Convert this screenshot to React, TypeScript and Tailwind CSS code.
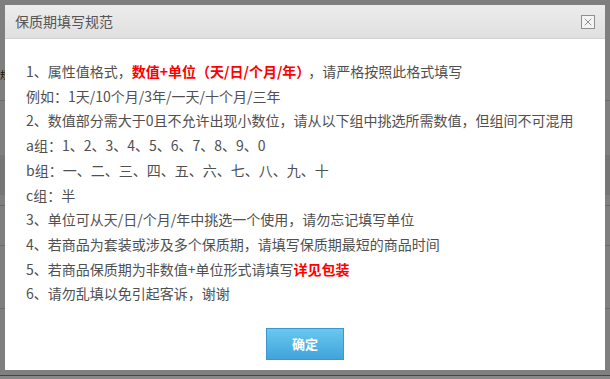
import { X } from 'lucide-react';

const lines: { text: string; red?: string; after?: string }[] = [
    { text: '1、属性值格式，', red: '数值+单位（天/日/个月/年）', after: '，请严格按照此格式填写' },
    { text: '例如：1天/10个月/3年/一天/十个月/三年' },
    { text: '2、数值部分需大于0且不允许出现小数位，请从以下组中挑选所需数值，但组间不可混用' },
    { text: 'a组：1、2、3、4、5、6、7、8、9、0' },
    { text: 'b组：一、二、三、四、五、六、七、八、九、十' },
    { text: 'c组：半' },
    { text: '3、单位可从天/日/个月/年中挑选一个使用，请勿忘记填写单位' },
    { text: '4、若商品为套装或涉及多个保质期，请填写保质期最短的商品时间' },
    { text: '5、若商品保质期为非数值+单位形式请填写', red: '详见包装' },
    { text: '6、请勿乱填以免引起客诉，谢谢' },
];

function BackgroundPage() {
    // faint page behind the mask, only its edges show
    return (
        <div className="w-[610px] h-[379px] bg-white flex flex-col text-[13px] text-[#333]">
            <div className="h-[70px]" />
            <div className="h-[10px] text-[10px] leading-[10px] text-[#222]">规</div>
            <div className="h-[20px]" />
            <div className="h-px bg-[#d8d8d8]" />
            <div className="h-[54px]" />
            <div className="h-[40px] bg-[#ececec]" />
            <div className="h-[10px]" />
            <div className="h-px bg-[#d0d0d0]" />
            <div className="h-[39px]" />
            <div className="h-px bg-[#d8d8d8]" />
            <div className="h-[62px]" />
            <div className="h-px bg-[#d8d8d8]" />
            <div className="flex-1" />
            <div className="h-[4px] bg-[#888]" />
        </div>
    );
}

export default function App() {
    return (
        <div className="relative w-[610px] h-[379px] overflow-hidden" style={{ fontFamily: '"Noto Sans CJK SC", "Noto Sans", sans-serif' }}>
            <BackgroundPage />
            <div className="absolute left-0 top-0 w-[610px] h-[376px] bg-black/50" />

            <div className="absolute left-[5px] top-[5px] w-[600px] h-[365px] bg-white flex flex-col">
                {/* Header */}
                <div className="h-[34px] flex items-center justify-between pl-[10px] pr-[10px] bg-gradient-to-b from-[#ececec] to-[#e0e0e0] border-b border-[#d2d2d2]">
                    <span className="text-[14px] text-[#555]">保质期填写规范</span>
                    <button className="w-[14px] h-[14px] border border-[#8f8f8f] bg-[#f4f4f4] flex items-center justify-center">
                        <X className="w-[12px] h-[12px] text-[#6f6f6f]" strokeWidth={1.5} />
                    </button>
                </div>

                {/* Content */}
                <div className="flex flex-col pl-[21px] pt-[20px] text-[14px] leading-[24.7px] text-[#505050]">
                    {lines.map((l, i) => (
                        <p key={i} className="whitespace-nowrap">
                            {l.text}
                            {l.red && <span className="text-[#ff0000] font-bold">{l.red}</span>}
                            {l.after && <span className="ml-[5px]">{l.after}</span>}
                        </p>
                    ))}
                </div>

                <div className="flex justify-center pt-[22px]">
                    <button className="w-[78px] h-[32px] border border-[#3a97cf] bg-gradient-to-b from-[#69c8ef] to-[#40a3db] text-white text-[13px] font-bold">
                        确定
                    </button>
                </div>
            </div>
        </div>
    );
}
